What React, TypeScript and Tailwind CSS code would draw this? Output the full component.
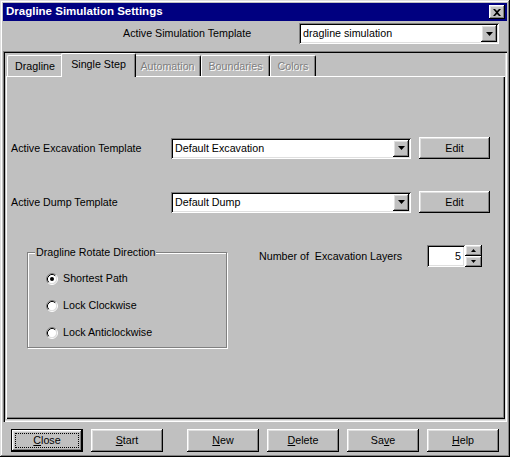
import React from "react";

const raised =
  "shadow-[inset_-1px_-1px_#000,inset_1px_1px_#fff,inset_-2px_-2px_#808080,inset_2px_2px_#dfdfdf]";
const sunken =
  "shadow-[inset_1px_1px_#808080,inset_-1px_-1px_#fff,inset_2px_2px_#000,inset_-2px_-2px_#dfdfdf]";

function DownArrow() {
  return (
    <svg width="7" height="4" viewBox="0 0 7 4">
      <path d="M0 0H7L3.5 4Z" fill="#000" />
    </svg>
  );
}

function Combo({ value, width }: { value: string; width: string }) {
  return (
    <div className={`${width} h-[21px] bg-white ${sunken} flex items-center p-[2px]`}>
      <span className="flex-1 pl-[2px] leading-none">{value}</span>
      <div className={`w-[16px] h-[17px] bg-[#c0c0c0] ${raised} flex items-center justify-center`}>
        <DownArrow />
      </div>
    </div>
  );
}

function Radio({ checked, label }: { checked?: boolean; label: string }) {
  return (
    <div className="flex items-center h-[13px] gap-[5px]">
      <svg width="12" height="12" viewBox="0 0 12 12">
        <circle cx="6" cy="6" r="4.5" fill="#fff" />
        <path d="M2.11 9.89A5.5 5.5 0 0 1 9.89 2.11" stroke="#808080" fill="none" />
        <path d="M9.89 2.11A5.5 5.5 0 0 1 2.11 9.89" stroke="#fff" fill="none" />
        <path d="M2.82 9.18A4.5 4.5 0 0 1 9.18 2.82" stroke="#000" fill="none" />
        <path d="M9.18 2.82A4.5 4.5 0 0 1 2.82 9.18" stroke="#dfdfdf" fill="none" />
        {checked && <circle cx="6" cy="6" r="2" fill="#000" />}
      </svg>
      <span className="leading-none">{label}</span>
    </div>
  );
}

function Button({
  children,
  className = "",
}: {
  children: React.ReactNode;
  className?: string;
}) {
  return (
    <div
      className={`w-[72px] h-[23px] bg-[#c0c0c0] ${raised} flex items-center justify-center leading-none ${className}`}
    >
      {children}
    </div>
  );
}

function Tab({
  label,
  width,
  selected,
  disabled,
}: {
  label: string;
  width: string;
  selected?: boolean;
  disabled?: boolean;
}) {
  return (
    <div
      className={`${width} ${
        selected ? "h-[24px] -mb-px relative z-10 -mx-[2px] pb-[2px]" : "h-[21px] pt-[1px]"
      } bg-[#c0c0c0] border-t border-l border-white border-r border-r-black rounded-tl-[2px] rounded-tr-[2px] shadow-[inset_-1px_0_#808080] flex items-center justify-center leading-none ${
        disabled ? "text-[#808080] [text-shadow:1px_1px_0_#fff]" : ""
      }`}
    >
      {label}
    </div>
  );
}

export default function App() {
  return (
    <div className="w-[510px] h-[457px] bg-[#c0c0c0] p-[3px] flex flex-col font-['Liberation_Sans',Arial,sans-serif] text-[10.7px] text-black shadow-[inset_-1px_-1px_#000,inset_1px_1px_#dfdfdf,inset_-2px_-2px_#808080,inset_2px_2px_#fff]">
      {/* Title bar */}
      <div className="h-[18px] bg-[#000080] flex items-center justify-between pl-[3px] pr-[2px]">
        <span className="text-white font-bold text-[11.5px] leading-none">
          Dragline Simulation Settings
        </span>
        <div className={`w-[16px] h-[14px] bg-[#c0c0c0] ${raised} flex items-center justify-center`}>
          <svg width="8" height="7" viewBox="0 0 8 7">
            <path d="M0 0h2l2 2 2-2h2L5 3.5 8 7H6L4 5 2 7H0l3-3.5Z" fill="#000" />
          </svg>
        </div>
      </div>

      {/* Template row */}
      <div className="h-[30px] pt-[2px] flex items-start">
        <div className="h-[21px] flex items-center ml-[120px] leading-none">
          Active Simulation Template
        </div>
        <div className="ml-auto mr-[8px]">
          <Combo value="dragline simulation" width="w-[200px]" />
        </div>
      </div>

      {/* Frame with tab control */}
      <div className="h-[371px] flex flex-col pl-[3px] pr-[2px] pt-[2px] pb-[3px] shadow-[inset_1px_1px_#808080,inset_2px_2px_#000,inset_-1px_-1px_#fff,inset_-2px_-2px_#dfdfdf]">
        <div className="h-[23px] flex items-end pl-[1px]">
          <Tab label="Dragline" width="w-[56px]" />
          <Tab label="Single Step" width="w-[75px]" selected />
          <Tab label="Automation" width="w-[67px]" disabled />
          <Tab label="Boundaries" width="w-[69px]" disabled />
          <Tab label="Colors" width="w-[46px]" disabled />
        </div>
        <div className="flex-1 flex flex-col pl-[5px] pt-[61px] shadow-[inset_1px_1px_#fff,inset_-1px_-1px_#000,inset_-2px_-2px_#808080]">
          {/* Excavation row */}
          <div className="flex items-center h-[22px]">
            <div className="w-[160px] leading-none">Active Excavation Template</div>
            <Combo value="Default Excavation" width="w-[240px]" />
            <Button className="ml-[8px] !w-[71px] !h-[22px]">Edit</Button>
          </div>
          {/* Dump row */}
          <div className="flex items-center h-[22px] mt-[32px]">
            <div className="w-[160px] leading-none">Active Dump Template</div>
            <Combo value="Default Dump" width="w-[240px]" />
            <Button className="ml-[8px] !w-[71px] !h-[22px]">Edit</Button>
          </div>
          {/* Group + layers */}
          <div className="flex items-start mt-[32px]">
            <div className="pt-[7px] ml-[16px]">
              <div className="relative w-[200px] h-[96px] border border-[#808080] shadow-[1px_1px_0_#fff,inset_1px_1px_0_#fff] flex flex-col gap-[14px] pl-[18px] pt-[19px]">
                <span className="absolute left-[7px] -top-[6px] bg-[#c0c0c0] px-[1px] leading-none">
                  Dragline Rotate Direction
                </span>
                <Radio checked label="Shortest Path" />
                <Radio label="Lock Clockwise" />
                <Radio label="Lock Anticlockwise" />
              </div>
            </div>
            <div className="flex items-center h-[22px] ml-[32px]">
              <div className="w-[168px] leading-none">Number of&nbsp; Excavation Layers</div>
              <div className={`w-[38px] h-[22px] bg-white ${sunken} flex items-center justify-end pr-[4px] leading-none`}>
                5
              </div>
              <div className="flex flex-col w-[17px] h-[22px]">
                <div className={`h-[11px] bg-[#c0c0c0] ${raised} flex items-center justify-center`}>
                  <svg width="5" height="3" viewBox="0 0 5 3">
                    <path d="M2.5 0L5 3H0Z" fill="#000" />
                  </svg>
                </div>
                <div className={`h-[11px] bg-[#c0c0c0] ${raised} flex items-center justify-center`}>
                  <svg width="5" height="3" viewBox="0 0 5 3">
                    <path d="M0 0H5L2.5 3Z" fill="#000" />
                  </svg>
                </div>
              </div>
            </div>
          </div>
        </div>
      </div>

      {/* Bottom buttons */}
      <div className="pt-[7px] flex">
        <div className="ml-[8px] w-[72px] h-[23px] border border-black">
          <div className={`w-full h-full bg-[#c0c0c0] ${raised} p-[3px] flex`}>
            <div className="flex-1 border border-dotted border-black flex items-center justify-center leading-none">
              <span>
                <u>C</u>lose
              </span>
            </div>
          </div>
        </div>
        <Button className="ml-[8px]">
          <u>S</u>tart
        </Button>
        <Button className="ml-[24px]">
          <u>N</u>ew
        </Button>
        <Button className="ml-[8px]">
          <u>D</u>elete
        </Button>
        <Button className="ml-[8px]">
          Sa<u>v</u>e
        </Button>
        <Button className="ml-[8px]">
          <u>H</u>elp
        </Button>
      </div>
    </div>
  );
}
